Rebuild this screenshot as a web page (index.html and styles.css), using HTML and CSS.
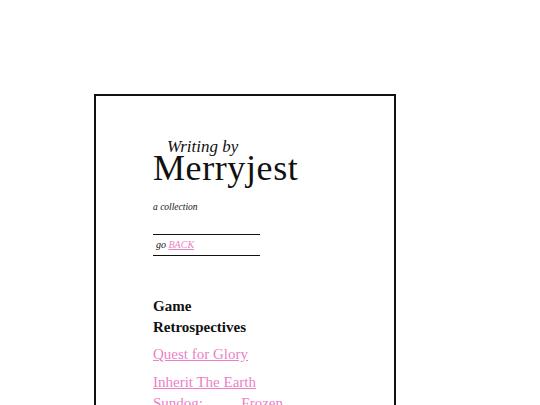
FILE: index.html
```html
<!DOCTYPE html>
<html>
<head>
<meta charset="utf-8">
<link rel="stylesheet" href="styles.css">
</head>
<body>
<div class="page">
  <header class="head">
    <div class="pre">Writing by</div>
    <h1 class="title">Merryjest</h1>
    <div class="sub">a collection</div>
    <div class="nav">go <a href="#">BACK</a></div>
  </header>
  <section class="list">
    <h2 class="cat">Game Retrospectives</h2>
    <p class="item"><a href="#">Quest for Glory</a></p>
    <p class="item"><a href="#">Inherit The Earth</a></p>
    <p class="item tight"><a href="#">Sundog: Frozen Legacy</a></p>
  </section>
</div>
</body>
</html>
```
FILE: styles.css
```css
html, body {
  margin: 0;
  padding: 0;
  background: #fff;
}
body {
  font-family: "Liberation Serif", "DejaVu Serif", serif;
  color: #111;
  overflow: hidden;
}
a {
  color: #ec7fc6;
  text-decoration: underline;
}
.page {
  margin: 94px 0 0 94px;
  width: 241px;
  min-height: 400px;
  border: 2px solid #111;
  padding: 42px 0 0 57px;
}
.head {
  width: 107px;
}
.pre {
  font-style: italic;
  font-size: 17px;
  line-height: 17px;
  padding-left: 14px;
  white-space: nowrap;
}
.title {
  margin: 0;
  font-weight: normal;
  font-size: 36px;
  line-height: 26px;
  letter-spacing: 0.6px;
  white-space: nowrap;
}
.sub {
  margin-top: 20px;
  font-style: italic;
  font-size: 9.5px;
  line-height: 12px;
}
.nav {
  margin-top: 21px;
  border-top: 1px solid #111;
  border-bottom: 1px solid #111;
  height: 20px;
  line-height: 20px;
  font-style: italic;
  font-size: 10px;
  padding-left: 3px;
}
.list {
  width: 130px;
  margin-top: 40px;
}
.cat {
  margin: 0;
  font-size: 15px;
  line-height: 21px;
  font-weight: bold;
}
.item {
  margin: 6px 0 0 0;
  font-size: 15px;
  line-height: 21px;
  text-align: justify;
}
.item + .item {
  margin-top: 7px;
}
.item + .item.tight {
  margin-top: 0;
}
```
